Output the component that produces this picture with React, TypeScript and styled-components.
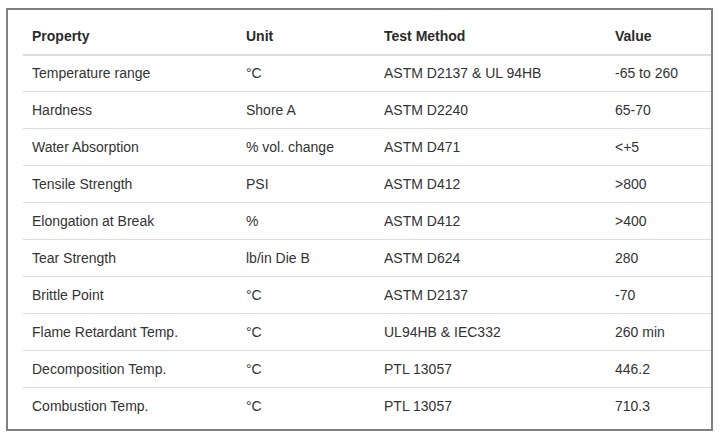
import React from "react";
import styled, { createGlobalStyle } from "styled-components";

const GlobalStyle = createGlobalStyle`
  html, body {
    margin: 0;
    padding: 0;
    background: #ffffff;
  }
  body {
    font-family: "Liberation Sans", Arial, sans-serif;
  }
`;

const Frame = styled.div`
  box-sizing: border-box;
  margin: 8px 0 0 6px;
  width: 707px;
  height: 423px;
  border: 2px solid #808080;
  padding: 7px 0 0 15px;
  overflow: hidden;
  background: #ffffff;
`;

const Table = styled.table`
  width: 700px;
  table-layout: fixed;
  border-collapse: collapse;
  font-size: 14px;
  color: #333333;
`;

const HeadCell = styled.th`
  box-sizing: border-box;
  height: 38px;
  padding: 0 9px;
  text-align: left;
  vertical-align: middle;
  font-weight: bold;
  color: #2b2b2b;
  border-bottom: 2px solid #dddddd;
`;

const Cell = styled.td`
  box-sizing: border-box;
  height: 37px;
  padding: 0 9px;
  vertical-align: middle;
  white-space: nowrap;
`;

const Row = styled.tr`
  &:first-child > td {
    height: 36px;
  }
  & + & > td {
    border-top: 1px solid #dddddd;
  }
`;

const rows: [string, string, string, string][] = [
  ["Temperature range", "°C", "ASTM D2137 & UL 94HB", "-65 to 260"],
  ["Hardness", "Shore A", "ASTM D2240", "65-70"],
  ["Water Absorption", "% vol. change", "ASTM D471", "<+5"],
  ["Tensile Strength", "PSI", "ASTM D412", ">800"],
  ["Elongation at Break", "%", "ASTM D412", ">400"],
  ["Tear Strength", "lb/in Die B", "ASTM D624", "280"],
  ["Brittle Point", "°C", "ASTM D2137", "-70"],
  ["Flame Retardant Temp.", "°C", "UL94HB & IEC332", "260 min"],
  ["Decomposition Temp.", "°C", "PTL 13057", "446.2"],
  ["Combustion Temp.", "°C", "PTL 13057", "710.3"],
];

export default function App() {
  return (
    <>
      <GlobalStyle />
      <Frame>
        <Table>
          <colgroup>
            <col style={{ width: 214 }} />
            <col style={{ width: 138 }} />
            <col style={{ width: 231 }} />
            <col style={{ width: 117 }} />
          </colgroup>
          <thead>
            <tr>
              <HeadCell>Property</HeadCell>
              <HeadCell>Unit</HeadCell>
              <HeadCell>Test Method</HeadCell>
              <HeadCell>Value</HeadCell>
            </tr>
          </thead>
          <tbody>
            {rows.map((r) => (
              <Row key={r[0]}>
                {r.map((c, i) => (
                  <Cell key={i}>{c}</Cell>
                ))}
              </Row>
            ))}
          </tbody>
        </Table>
      </Frame>
    </>
  );
}
